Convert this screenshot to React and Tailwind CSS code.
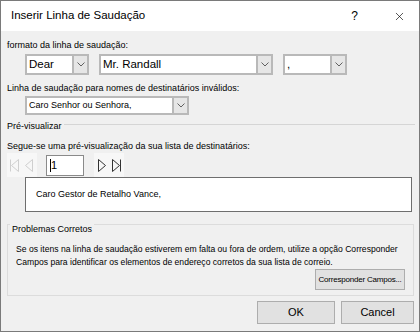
import { X } from 'lucide-react'

/* Caixa de combinação estilo Windows */
function Combo({ value, width, height = 21, big = true }) {
  return (
    <div
      className="flex border-2 border-[#b9b9b9] bg-white"
      style={{ width, height }}
    >
      <div className={big ? 'flex-1 pl-[2px] text-[11.5px] leading-[17px] text-black' : 'flex-1 pl-[2px] text-[9px] leading-[15px] text-black'}>
        {value}
      </div>
      <div className="w-[15px] border-l-2 border-[#b9b9b9] bg-[#e6e6e6] flex items-center justify-center">
        <svg width="8" height="5" viewBox="0 0 8 5">
          <polyline points="0.5,0.5 4,4 7.5,0.5" fill="none" stroke="#606060" strokeWidth="1" />
        </svg>
      </div>
    </div>
  )
}

function NavIcon({ type, color }) {
  return (
    <svg width="12" height="13" viewBox="0 0 12 13">
      {type === 'first' && (
        <>
          <line x1="1.5" y1="0.5" x2="1.5" y2="12.5" stroke={color} />
          <polygon points="9.5,0.5 2.5,6.5 9.5,12.5" fill="none" stroke={color} />
        </>
      )}
      {type === 'prev' && <polygon points="8.5,0.5 1.5,6.5 8.5,12.5" fill="none" stroke={color} />}
      {type === 'next' && <polygon points="2.5,0.5 9.5,6.5 2.5,12.5" fill="none" stroke={color} />}
      {type === 'last' && (
        <>
          <polygon points="1.5,0.5 8.5,6.5 1.5,12.5" fill="none" stroke={color} />
          <line x1="9.5" y1="0.5" x2="9.5" y2="12.5" stroke={color} />
        </>
      )}
    </svg>
  )
}

export default function App() {
  return (
    <div className="w-[420px] h-[332px] border border-[#7a7a7a] bg-[#f0f0f0] flex flex-col overflow-hidden font-['Liberation_Sans',Arial,sans-serif] text-black">
      {/* Barra de título */}
      <div className="h-[30px] bg-white flex items-center shrink-0">
        <span className="ml-[10px] text-[11.5px]">Inserir Linha de Saudação</span>
        <span className="ml-auto text-[12px] mr-[35px]">?</span>
        <X size={13} strokeWidth={1.2} className="mr-[13px] text-black" />
      </div>

      <div className="flex-1 flex flex-col pl-[6px] pr-[5px] text-[9px] leading-[11px]">
        <p className="mt-[9px]">formato da linha de saudação:</p>
        <div className="mt-[3px] flex gap-[10px] pl-[18px]">
          <Combo value="Dear" width={64} />
          <Combo value="Mr. Randall" width={174} />
          <Combo value="," width={64} />
        </div>

        <p className="mt-[8px]">Linha de saudação para nomes de destinatários inválidos:</p>
        <div className="mt-[2px] pl-[18px]">
          <Combo value="Caro Senhor ou Senhora," width={164} height={19} big={false} />
        </div>

        <div className="mt-[6px] flex items-start">
          <span>Pré-visualizar</span>
          <div className="flex-1 h-px bg-[#d5d5d5] mt-[3px] ml-[2px] mr-[-1px]" />
        </div>

        <p className="mt-[9px]">Segue-se uma pré-visualização da sua lista de destinatários:</p>
        <div className="mt-[1px] h-[24px] flex items-center">
          <div className="h-[24px] w-[30px] bg-[#f7f7f7] flex items-center justify-center gap-[3px]">
            <NavIcon type="first" color="#cfcfcf" />
            <NavIcon type="prev" color="#cfcfcf" />
          </div>
          <div className="ml-[9px] w-[38px] h-[21px] border border-[#8a8a8a] bg-white flex items-center pl-[3px] text-[11px]">
            <span className="w-px h-[13px] bg-black" />
            <span>1</span>
          </div>
          <div className="ml-[10px] h-[24px] w-[30px] bg-[#f7f7f7] flex items-center justify-center gap-[3px]">
            <NavIcon type="next" color="#333333" />
            <NavIcon type="last" color="#333333" />
          </div>
        </div>

        <div className="ml-[18px] mr-[2px] h-[35px] border border-[#6e6e6e] bg-white flex items-center pl-[10px]">
          Caro Gestor de Retalho Vance,
        </div>

        {/* Caixa de grupo: a linha fica acima do texto do título */}
        <fieldset className="mt-[1px] h-[83px] border border-[#dcdcdc] pl-[8px] pr-[8px] flex flex-col">
          <legend className="ml-[-6px] px-[2px] pt-[11px]">Problemas Corretos</legend>
          <p className="mt-[8px] leading-[13px] text-[8.6px] whitespace-nowrap">
            Se os itens na linha de saudação estiverem em falta ou fora de ordem, utilize a opção Corresponder
            <br />
            Campos para identificar os elementos de endereço corretos da sua lista de correio.
          </p>
          <div className="flex justify-end">
            <button className="w-[90px] h-[21px] border border-[#adadad] bg-[#e1e1e1] text-[8px] whitespace-nowrap tracking-[-0.2px]">
              Corresponder Campos...
            </button>
          </div>
        </fieldset>

        <div className="mt-[5px] flex justify-end gap-[6px]">
          <button className="w-[78px] h-[23px] border border-[#adadad] bg-[#e1e1e1] text-[11px]">OK</button>
          <button className="w-[73px] h-[23px] border border-[#adadad] bg-[#e1e1e1] text-[11px]">Cancel</button>
        </div>
      </div>
    </div>
  )
}
